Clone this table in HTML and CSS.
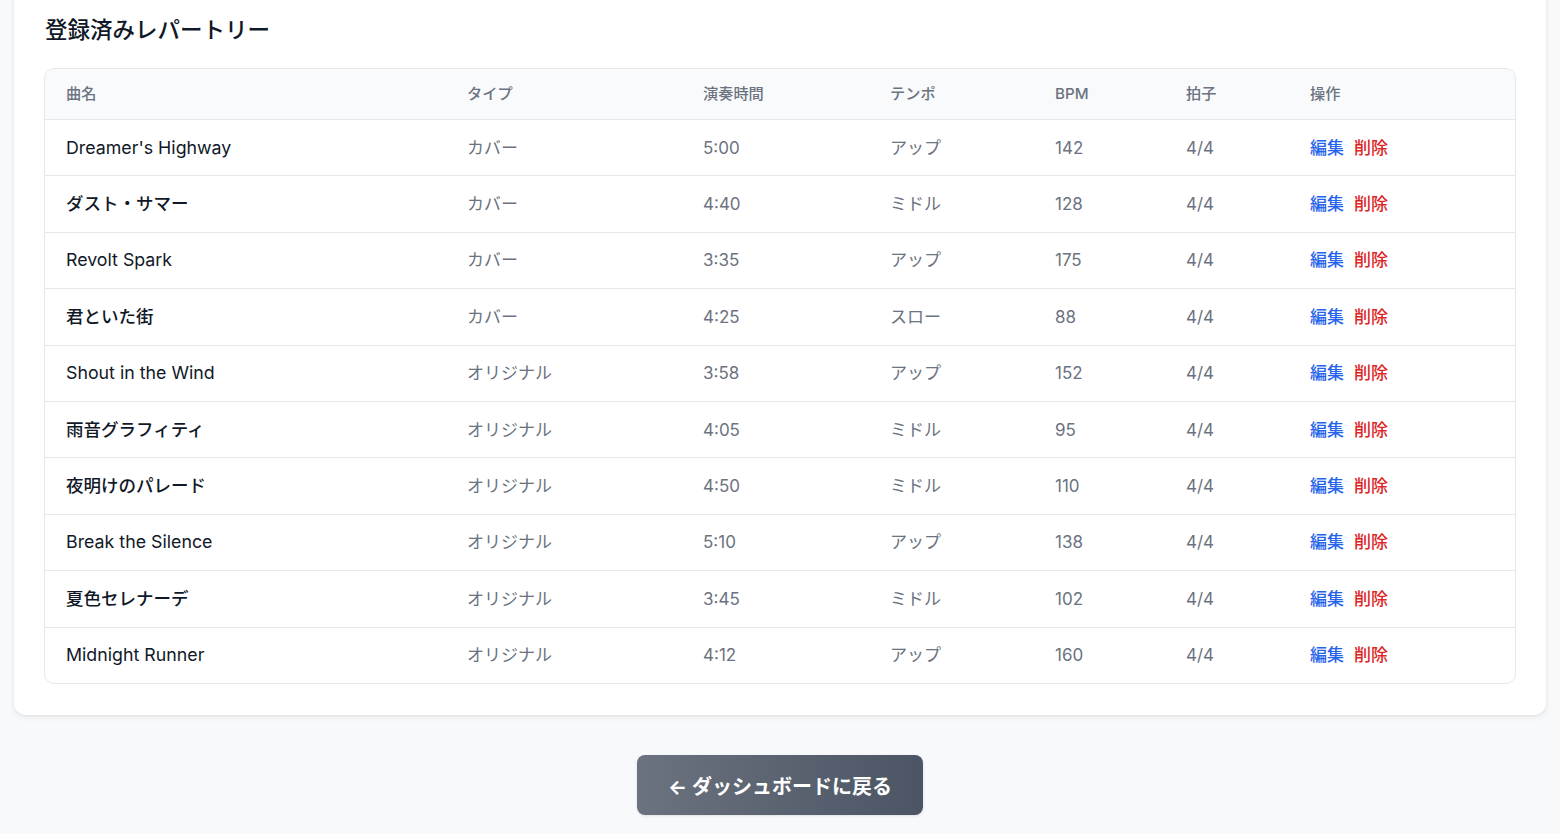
FILE: index.html
```html
<!DOCTYPE html>
<html lang="ja">
<head>
<meta charset="utf-8">
<title>登録済みレパートリー</title>
<link rel="stylesheet" href="styles.css">
</head>
<body>
<div class="page">
  <section class="card">
    <h2 class="title">登録済みレパートリー</h2>
    <div class="table-wrap">
      <table class="rep">
        <colgroup>
          <col class="c1"><col class="c2"><col class="c3"><col class="c4"><col class="c5"><col class="c6"><col class="c7">
        </colgroup>
        <thead>
          <tr><th>曲名</th><th>タイプ</th><th>演奏時間</th><th>テンポ</th><th>BPM</th><th>拍子</th><th>操作</th></tr>
        </thead>
        <tbody>
          <tr><td class="name">Dreamer's Highway</td><td>カバー</td><td>5:00</td><td>アップ</td><td>142</td><td>4/4</td><td class="ops"><a class="edit">編集</a><a class="del">削除</a></td></tr>
          <tr><td class="name jp">ダスト・サマー</td><td>カバー</td><td>4:40</td><td>ミドル</td><td>128</td><td>4/4</td><td class="ops"><a class="edit">編集</a><a class="del">削除</a></td></tr>
          <tr><td class="name">Revolt Spark</td><td>カバー</td><td>3:35</td><td>アップ</td><td>175</td><td>4/4</td><td class="ops"><a class="edit">編集</a><a class="del">削除</a></td></tr>
          <tr><td class="name jp">君といた街</td><td>カバー</td><td>4:25</td><td>スロー</td><td>88</td><td>4/4</td><td class="ops"><a class="edit">編集</a><a class="del">削除</a></td></tr>
          <tr><td class="name">Shout in the Wind</td><td>オリジナル</td><td>3:58</td><td>アップ</td><td>152</td><td>4/4</td><td class="ops"><a class="edit">編集</a><a class="del">削除</a></td></tr>
          <tr><td class="name jp">雨音グラフィティ</td><td>オリジナル</td><td>4:05</td><td>ミドル</td><td>95</td><td>4/4</td><td class="ops"><a class="edit">編集</a><a class="del">削除</a></td></tr>
          <tr><td class="name jp">夜明けのパレード</td><td>オリジナル</td><td>4:50</td><td>ミドル</td><td>110</td><td>4/4</td><td class="ops"><a class="edit">編集</a><a class="del">削除</a></td></tr>
          <tr><td class="name">Break the Silence</td><td>オリジナル</td><td>5:10</td><td>アップ</td><td>138</td><td>4/4</td><td class="ops"><a class="edit">編集</a><a class="del">削除</a></td></tr>
          <tr><td class="name jp">夏色セレナーデ</td><td>オリジナル</td><td>3:45</td><td>ミドル</td><td>102</td><td>4/4</td><td class="ops"><a class="edit">編集</a><a class="del">削除</a></td></tr>
          <tr><td class="name">Midnight Runner</td><td>オリジナル</td><td>4:12</td><td>アップ</td><td>160</td><td>4/4</td><td class="ops"><a class="edit">編集</a><a class="del">削除</a></td></tr>
        </tbody>
      </table>
    </div>
  </section>
  <div class="actions">
    <a class="back-btn">← ダッシュボードに戻る</a>
  </div>
</div>
</body>
</html>
```

FILE: styles.css
```css
* { box-sizing: border-box; }
html, body {
  margin: 0;
  padding: 0;
  background: #f8f9fb;
  font-family: Inter, "Noto Sans CJK JP", sans-serif;
  color: #111827;
}
.page {
  padding: 0 14px 40px;
}
.card {
  background: #fff;
  border-radius: 12px;
  margin-top: -15px;
  padding: 30px 30px 31px;
  box-shadow: 0 2px 6px rgba(0,0,0,0.08), 0 1px 2px rgba(0,0,0,0.04);
}
.title {
  margin: 0 0 23px 1px;
  font-size: 22.5px;
  line-height: 30px;
  font-weight: 500;
  color: #111827;
}
.table-wrap {
  border: 1px solid #e5e7eb;
  border-radius: 10px;
  overflow: hidden;
}
.rep {
  width: 100%;
  border-collapse: collapse;
  table-layout: fixed;
}
.c1 { width: 401px; }
.c2 { width: 236px; }
.c3 { width: 187px; }
.c4 { width: 165px; }
.c5 { width: 131px; }
.c6 { width: 124px; }
.c7 { width: auto; }
.rep th {
  background: #f9fafb;
  text-align: left;
  font-size: 15.2px;
  line-height: 20px;
  font-weight: 500;
  color: #6b7280;
  padding: 15px 21px;
  border-bottom: 1px solid #e5e7eb;
}
.rep td {
  font-size: 17px;
  line-height: 20.4px;
  color: #6b7280;
  padding: 17.5px 21px 17.5px;
  border-bottom: 1px solid #e5e7eb;
  white-space: nowrap;
}
.rep tbody tr:last-child td { border-bottom: none; }
.rep td.name {
  color: #111827;
  font-size: 17.8px;
  font-weight: 400;
}
.rep td.name.jp {
  font-size: 17.5px;
  font-weight: 500;
}
.ops a {
  font-weight: 500;
  cursor: pointer;
}
.ops .edit { color: #2563eb; margin-right: 10px; }
.ops .del { color: #dc2626; }
.actions {
  display: flex;
  justify-content: center;
  padding-top: 40px;
}
.back-btn {
  display: inline-flex;
  align-items: center;
  justify-content: center;
  width: 286px;
  height: 60px;
  border-radius: 8px;
  background: linear-gradient(90deg, #6b7280, #4b5563);
  color: #fff;
  font-size: 20px;
  font-weight: 700;
  cursor: pointer;
  box-shadow: 0 1px 3px rgba(0,0,0,0.1);
}
```
